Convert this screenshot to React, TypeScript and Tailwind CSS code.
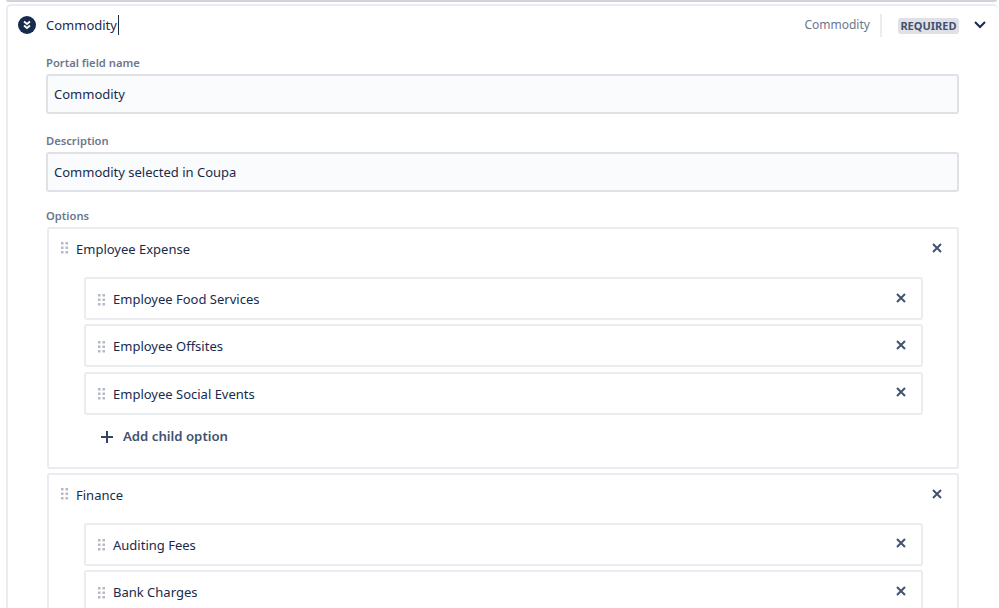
const font = "[font-family:'Noto_Sans',sans-serif]";

function DragHandle() {
  return (
    <svg width="7" height="12" viewBox="0 0 7 12" className="shrink-0 text-[#b3bac5]" fill="currentColor">
      <rect x="0" y="0" width="2.5" height="2.5" />
      <rect x="4.5" y="0" width="2.5" height="2.5" />
      <rect x="0" y="4.5" width="2.5" height="2.5" />
      <rect x="4.5" y="4.5" width="2.5" height="2.5" />
      <rect x="0" y="9" width="2.5" height="2.5" />
      <rect x="4.5" y="9" width="2.5" height="2.5" />
    </svg>
  );
}

function CloseIcon() {
  return (
    <svg width="10" height="10" viewBox="0 0 10 10" className="shrink-0 text-[#42526e]" fill="none" stroke="currentColor" strokeWidth="2">
      <path d="M1 1l8 8M9 1l-8 8" />
    </svg>
  );
}

function ChildOption({ label }: { label: string }) {
  return (
    <div className="flex h-[43px] items-center rounded-[3px] border-2 border-[#ebecf0] pl-[12px] pr-[15px]">
      <span className="mt-[2px]">
        <DragHandle />
      </span>
      <span className="ml-[8px] flex-1 pt-[2px] text-[13px] text-[#172b4d]">{label}</span>
      <span className="mb-[2px]">
        <CloseIcon />
      </span>
    </div>
  );
}

function OptionGroup({ label, children, addChild }: { label: string; children: string[]; addChild?: boolean }) {
  return (
    <div className="rounded-[3px] border-2 border-[#ebecf0] pl-[35px] pr-[34px]">
      <div className="-ml-[23px] -mr-[19px] flex h-[38px] items-center">
        <DragHandle />
        <span className="ml-[8px] flex-1 pt-[4px] text-[13px] text-[#172b4d]">{label}</span>
        <CloseIcon />
      </div>
      <div className="mt-[10px] flex flex-col gap-[4.4px]">
        {children.map((c) => (
          <ChildOption key={c} label={c} />
        ))}
      </div>
      {addChild && (
        <div className="flex h-[52px] items-center pb-[8px] pl-[17px]">
          <svg width="12" height="12" viewBox="0 0 12 12" className="text-[#344563]" fill="none" stroke="currentColor" strokeWidth="2">
            <path d="M6 0v12M0 6h12" />
          </svg>
          <span className="ml-[10px] text-[13.2px] font-semibold text-[#42526e]">Add child option</span>
        </div>
      )}
    </div>
  );
}

export default function App() {
  return (
    <div className={`${font} h-[608px] w-[999px] overflow-hidden bg-white`}>
      <div className="ml-[6px] mr-[2px] h-[2px] rounded-b-[3px] bg-[#d0d3d9]" />
      <div className="ml-[6px] mr-[1px] mt-[2px] h-[700px] rounded-t-[5px] border-l-2 border-t-2 border-[#ebecf0]">
        {/* Header */}
        <div className="flex h-[38px] items-center pl-[10px] pr-[12px]">
          <span className="flex h-[18px] w-[18px] items-center justify-center rounded-full bg-[#172b4d]">
            <svg width="10" height="10" viewBox="0 0 10 10" fill="none" stroke="white" strokeWidth="1.8">
              <path d="M2 1.5l3 2.5 3-2.5M2 5.5l3 2.5 3-2.5" />
            </svg>
          </span>
          <span className="ml-[10px] pt-[2px] text-[13px] text-[#172b4d]">Commodity</span>
          <span className="ml-px h-[20px] w-px bg-[#172b4d]" />
          <span className="ml-auto text-[12px] text-[#6b778c]">Commodity</span>
          <span className="ml-[10px] h-[23px] w-[2px] bg-[#ebecf0]" />
          <span className="ml-[16px] mt-[1px] rounded-[3px] bg-[#dfe1e6] px-[2.5px] text-[11px] font-bold leading-[16px] text-[#42526e]">REQUIRED</span>
          <svg width="12" height="8" viewBox="0 0 12 8" className="ml-[15px] text-[#172b4d]" fill="none" stroke="currentColor" strokeWidth="2">
            <path d="M1 1l5 5 5-5" />
          </svg>
        </div>

        {/* Form */}
        <div className="ml-[38px] mr-[39px] mt-[11px]">
          <div className="text-[11.2px] font-semibold leading-[16px] text-[#6b778c]">Portal field name</div>
          <div className="mt-[3px] flex h-[40px] items-center rounded-[3px] border-2 border-[#dfe1e6] bg-[#fafbfc] px-[6px] pt-[2px] text-[13px] text-[#172b4d]">Commodity</div>
          <div className="mt-[19px] text-[11.2px] font-semibold leading-[16px] text-[#6b778c]">Description</div>
          <div className="mt-[3px] flex h-[40px] items-center rounded-[3px] border-2 border-[#dfe1e6] bg-[#fafbfc] px-[6px] pt-[2px] text-[13px] text-[#172b4d]">Commodity selected in Coupa</div>
          <div className="mt-[16px] text-[11.2px] font-semibold leading-[16px] text-[#6b778c]">Options</div>
          <div className="ml-px mt-[3px] flex flex-col gap-[4px]">
            <OptionGroup label="Employee Expense" addChild children={["Employee Food Services", "Employee Offsites", "Employee Social Events"]} />
            <OptionGroup label="Finance" children={["Auditing Fees", "Bank Charges"]} />
          </div>
        </div>
      </div>
    </div>
  );
}
